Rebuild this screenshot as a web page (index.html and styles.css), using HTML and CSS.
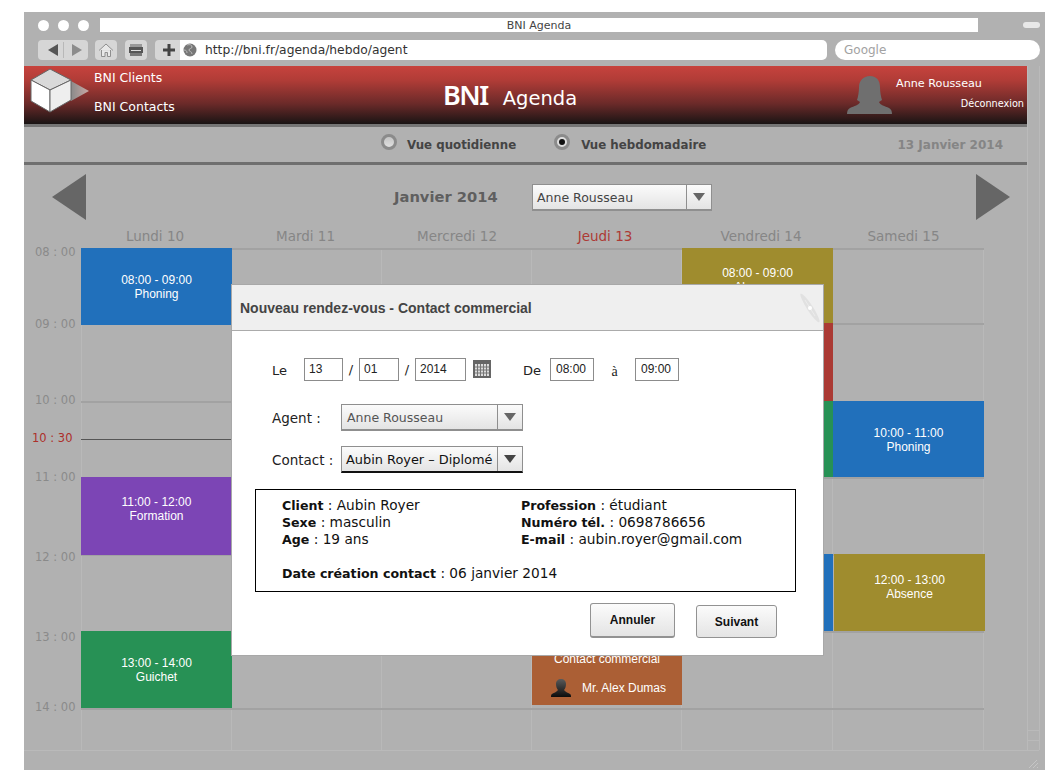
FILE: index.html
```html
<!DOCTYPE html>
<html lang="fr">
<head>
    <meta charset="UTF-8">
    <title>BNI Agenda</title>
    <link rel="stylesheet" href="styles.css">
</head>
<body>
    <div class="window">
        <div class="chrome">
            <div class="title-row">
                <div class="lights"><span></span><span></span><span></span></div>
                <div class="title-bar">BNI Agenda</div>
                <div class="pill"></div>
            </div>
            <div class="tool-row">
                <div class="tool nav-group">
                    <svg width="50" height="20" viewBox="0 0 50 20"><path d="M10 10l10-6v12z" fill="#555"/><path d="M25.500 2v16" stroke="#b8b8b8"/><path d="M34 4l10 6-10 6z" fill="#8c8c8c"/></svg>
                </div>
                <div class="tool home">
                    <svg width="22" height="20" viewBox="0 0 22 20"><path d="M4 10.500l7-6.500 7 6.500M6.500 10v6.500h3.500v-4h2.500v4h3V10" fill="#e8e8e8" stroke="#8f8f8f"/></svg>
                </div>
                <div class="tool print">
                    <svg width="22" height="20" viewBox="0 0 22 20"><rect x="5" y="4" width="12" height="3" fill="#999"/><rect x="4" y="7" width="14" height="6" fill="#555"/><rect x="6" y="10" width="10" height="1" fill="#ddd"/><rect x="5" y="13" width="12" height="3" fill="#777"/></svg>
                </div>
                <div class="tool plus">
                    <svg width="25" height="20" viewBox="0 0 25 20"><path d="M14 4v12M8 10h12" stroke="#444" stroke-width="3"/></svg>
                </div>
                <div class="url">
                    <svg width="14" height="14" viewBox="0 0 14 14"><circle cx="7" cy="7" r="6.500" fill="#777"/><path d="M4 2c3-1 5 0 5 2s-3 1-3 3 3 1 3 4M1 7c2 0 3 1 3 3" stroke="#bbb" fill="none"/></svg>
                    <span>http://bni.fr/agenda/hebdo/agent</span>
                </div>
                <div class="search">Google</div>
            </div>
        </div>

        <div class="middle">
            <div class="page">
                <header class="app-header">
                    <svg class="logo" width="60" height="46" viewBox="0 0 60 46">
                        <defs>
                            <linearGradient id="fade" x1="0" x2="1" y1="0" y2="0"><stop offset="0" stop-color="#8a8a8a"/><stop offset="1" stop-color="#c9a9a5"/></linearGradient>
                        </defs>
                        <path d="M41 13l18 10-18 10z" fill="url(#fade)"/>
                        <path d="M1 12L20 1l21 11-21 10z" fill="#d9d9d9" stroke="#666"/>
                        <path d="M1 12l19 10v22L1 33z" fill="#fff" stroke="#666"/>
                        <path d="M20 22l21-10v20L20 44z" fill="#eee" stroke="#666"/>
                    </svg>
                    <nav class="app-links">
                        <a>BNI Clients</a>
                        <a>BNI Contacts</a>
                    </nav>
                    <h1 class="app-title"><b>BNI</b> <span>Agenda</span></h1>
                    <svg class="avatar" width="46" height="38" viewBox="0 0 46 38">
                        <path d="M23 0c7 0 10 5 10 11 0 5 1 10 2 13l-3 2c1 3 6 4 10 6 2 1 3 3 3 6H0c0-3 1-5 3-6 4-2 9-3 10-6l-3-2c1-3 2-8 2-13C12 5 16 0 23 0z" fill="#6f6f6f"/>
                    </svg>
                    <div class="user">
                        <div class="user-name">Anne Rousseau</div>
                        <div class="logout">Déconnexion</div>
                    </div>
                </header>

                <div class="view-bar">
                    <span class="radio"></span>
                    <span class="view-label">Vue quotidienne</span>
                    <span class="radio radio-on"></span>
                    <span class="view-label">Vue hebdomadaire</span>
                    <span class="today">13 Janvier 2014</span>
                </div>

                <div class="month-bar">
                    <svg class="arrow" width="34" height="46" viewBox="0 0 34 46"><path d="M34 0v46L0 23z" fill="#666"/></svg>
                    <span class="month">Janvier 2014</span>
                    <div class="select month-select">
                        <span class="select-text">Anne Rousseau</span>
                        <span class="select-btn"><i class="caret"></i></span>
                    </div>
                    <svg class="arrow arrow-next" width="34" height="46" viewBox="0 0 34 46"><path d="M0 0v46l34-23z" fill="#666"/></svg>
                </div>

                <div class="days">
                    <span class="day-left">Lundi 10</span>
                    <span class="day-left">Mardi 11</span>
                    <span>Mercredi 12</span>
                    <span class="day-now">Jeudi 13</span>
                    <span class="day-fri">Vendredi 14</span>
                    <span class="day-last">Samedi 15</span>
                </div>

                <div class="agenda">
                    <div class="col c1"></div>
                    <div class="col c2"></div>
                    <div class="col c3"></div>
                    <div class="col c4"></div>
                    <div class="col c5"></div>
                    <div class="col c6"></div>
                    <div class="line r1"></div>
                    <div class="line r2"></div>
                    <div class="line r3"></div>
                    <div class="line r4"></div>
                    <div class="line r5"></div>
                    <div class="line r6"></div>
                    <div class="line r7"></div>

                    <span class="hour h8">08 : 00</span>
                    <span class="hour h9">09 : 00</span>
                    <span class="hour h10">10 : 00</span>
                    <span class="hour h11">11 : 00</span>
                    <span class="hour h12">12 : 00</span>
                    <span class="hour h13">13 : 00</span>
                    <span class="hour h14">14 : 00</span>

                    <div class="now-line"><span class="now-label">10 : 30</span></div>

                    <div class="event blue c1 r1 ev-long">08:00 - 09:00<br>Phoning</div>
                    <div class="event purple c1 r4 ev-up-more">11:00 - 12:00<br>Formation</div>
                    <div class="event green c1 r6">13:00 - 14:00<br>Guichet</div>
                    <div class="event orange c4 r6">
                        <div>Contact commercial</div>
                        <div class="contact">
                            <svg width="22" height="18" viewBox="0 0 22 18">
                                <defs>
                                    <linearGradient id="bust" x1="0" x2="0" y1="0" y2="1"><stop offset="0" stop-color="#5a5a5a"/><stop offset="1" stop-color="#0c0c0c"/></linearGradient>
                                </defs>
                                <path d="M11 0c3 0 5 2 5 5 0 3-1 5-2 6 1 2 5 3 6 4 1 .5 1 2 1 3H1c0-1 0-2.500 1-3 1-1 5-2 6-4-1-1-2-3-2-6 0-3 2-5 5-5z" fill="url(#bust)"/>
                            </svg>
                            <span>Mr. Alex Dumas</span>
                        </div>
                    </div>
                    <div class="event olive c5 r1 ev-up">08:00 - 09:00<br>Absence</div>
                    <div class="event red c5 r2"></div>
                    <div class="event green c5 r3"></div>
                    <div class="event blue c5 r5"></div>
                    <div class="event blue c6 r3 ev-down">10:00 - 11:00<br>Phoning</div>
                    <div class="event olive c6 r5 ev-up ev-wide">12:00 - 13:00<br>Absence</div>
                </div>
            </div>
            <div class="scroll">
                <div class="scroll-track"></div>
                <div class="scroll-btn"></div>
                <div class="scroll-btn"></div>
            </div>
        </div>
        <div class="status">
            <svg width="12" height="10" viewBox="0 0 12 10"><path d="M2 10l8-8M6 10l5-5M10 10l1-1" stroke="#c6c6c6"/></svg>
        </div>

        <div class="dialog">
            <div class="dialog-head">
                <span>Nouveau rendez-vous - Contact commercial</span>
                <svg width="22" height="30" viewBox="0 0 22 30">
                    <ellipse cx="11" cy="15" rx="3" ry="17" transform="rotate(-33 11 15)" fill="#e1e1e1"/>
                    <path d="M6 7l10 16" stroke="#ececec"/>
                    <circle cx="11" cy="15" r="2" fill="#fff"/>
                </svg>
            </div>
            <div class="dialog-body">
                <div class="date-row">
                    <label class="lbl-le">Le</label>
                    <span class="field f-day">13</span>
                    <span class="slash">/</span>
                    <span class="field f-month">01</span>
                    <span class="slash">/</span>
                    <span class="field f-year">2014</span>
                    <svg class="cal" width="18" height="18" viewBox="0 0 18 18">
                        <rect width="18" height="18" fill="#666"/>
                        <rect x="2" y="4" width="14" height="12" fill="#ddd"/>
                        <path d="M4.500 4v12M7.500 4v12M10.500 4v12M13.500 4v12M2 7h14M2 10h14M2 13h14" stroke="#777"/>
                    </svg>
                    <label class="lbl-de">De</label>
                    <span class="field f-time">08:00</span>
                    <label class="lbl-a">à</label>
                    <span class="field f-time">09:00</span>
                </div>
                <div class="form-row agent-row">
                    <label>Agent :</label>
                    <div class="select form-select">
                        <span class="select-text muted">Anne Rousseau</span>
                        <span class="select-btn"><i class="caret"></i></span>
                    </div>
                </div>
                <div class="form-row contact-row">
                    <label>Contact :</label>
                    <div class="select form-select select-dark">
                        <span class="select-text">Aubin Royer – Diplomé</span>
                        <span class="select-btn"><i class="caret"></i></span>
                    </div>
                </div>
                <div class="info">
                    <div class="info-cols">
                        <div class="info-col">
                            <div><b>Client</b> : Aubin Royer</div>
                            <div><b>Sexe</b> : masculin</div>
                            <div><b>Age</b> : 19 ans</div>
                        </div>
                        <div class="info-col">
                            <div><b>Profession</b> : étudiant</div>
                            <div><b>Numéro tél.</b> : 0698786656</div>
                            <div><b>E-mail</b> : aubin.royer@gmail.com</div>
                        </div>
                    </div>
                    <div class="info-date"><b>Date création contact</b> : 06 janvier 2014</div>
                </div>
                <div class="actions">
                    <button class="btn btn-main">Annuler</button>
                    <button class="btn">Suivant</button>
                </div>
            </div>
        </div>
    </div>
</body>
</html>
```

FILE: styles.css
```css
* {
    box-sizing: border-box;
}
body {
    margin: 0;
    background-color: #fff;
    font-family: "DejaVu Sans", sans-serif;
    overflow: hidden;
}
.window {
    position: relative;
    width: 1021px;
    height: 758px;
    margin: 12px 0 0 24px;
    background-color: #b1b1b1;
}

/* browser frame */
.chrome {
    height: 54px;
    padding-top: 6px;
}
.title-row {
    display: flex;
    align-items: center;
    height: 14px;
}
.lights {
    display: flex;
    gap: 9px;
    width: 76px;
    padding-left: 14px;
}
.lights span {
    width: 11px;
    height: 11px;
    border-radius: 50%;
    background-color: #fff;
}
.title-bar {
    width: 878px;
    height: 14px;
    background-color: #fff;
    color: #444;
    font-size: 11px;
    line-height: 15px;
    text-align: center;
}
.pill {
    width: 17px;
    height: 6px;
    margin-left: 45px;
    border-radius: 3px;
    background-color: #e8e8e8;
}
.tool-row {
    display: flex;
    height: 20px;
    margin-top: 8px;
    padding-left: 14px;
}
.tool {
    height: 20px;
    border-radius: 4px;
    background-color: #d6d6d6;
}
.tool svg {
    display: block;
}
.nav-group {
    width: 50px;
}
.home {
    width: 22px;
    margin-left: 7px;
}
.print {
    width: 22px;
    margin-left: 8px;
}
.plus {
    width: 25px;
    margin-left: 8px;
    border-radius: 4px 0 0 4px;
}
.url {
    display: flex;
    align-items: center;
    gap: 8px;
    width: 647px;
    padding-left: 3px;
    border-radius: 0 5px 5px 0;
    background-color: #fff;
    color: #333;
    font-size: 12.300px;
}
.search {
    width: 205px;
    margin-left: 8px;
    padding-left: 9px;
    border-radius: 10px;
    background-color: #fff;
    color: #a2a2a2;
    font-size: 12px;
    line-height: 20px;
}

.middle {
    display: flex;
    height: 684px;
}
.page {
    width: 1003px;
}
.scroll {
    display: flex;
    flex-direction: column;
    width: 13px;
    padding-top: 6px;
    border-right: 1px solid #bababa;
    border-left: 1px solid #bababa;
}
.scroll-track {
    flex: 1;
}
.scroll-btn {
    height: 10px;
    border-top: 1px solid #bababa;
}
.status {
    display: flex;
    justify-content: flex-end;
    align-items: flex-end;
    width: 1015px;
    height: 20px;
    padding-bottom: 2px;
    border-top: 1px solid #bababa;
}

/* app header */
.app-header {
    display: flex;
    height: 61px;
    border-bottom: 3px solid #757575;
    background: linear-gradient(#c7433d 0%, #b03c37 25%, #6b2a29 65%, #191414 100%);
    color: #fff;
}
.logo {
    flex: none;
    margin: 2px 0 0 6px;
}
.app-links {
    display: flex;
    flex-direction: column;
    gap: 15px;
    width: 120px;
    margin-left: 4px;
    padding-top: 5px;
    font-size: 12.500px;
    line-height: 14px;
}
.app-title {
    display: flex;
    flex: none;
    align-items: baseline;
    gap: 15px;
    width: 135px;
    margin: 0 0 0 229px;
    padding-top: 9px;
    font-size: 19.500px;
    font-weight: normal;
    line-height: 40px;
    white-space: nowrap;
}
.app-title b {
    font-family: "Noto Sans", sans-serif;
    font-size: 27px;
    font-weight: 600;
    letter-spacing: -1.500px;
}
.avatar {
    flex: none;
    margin: 10px 0 0 269px;
}
.user {
    width: 131px;
    padding: 11px 0 0 3px;
}
.user-name {
    font-size: 11.200px;
    line-height: 14px;
}
.logout {
    margin-top: 7px;
    font-size: 9.700px;
    line-height: 12px;
    text-align: right;
}

/* view switch */
.view-bar {
    display: flex;
    align-items: center;
    height: 38px;
    padding: 0 24px 0 357px;
    border-bottom: 3px solid #6f6f6f;
}
.radio {
    width: 16px;
    height: 16px;
    margin-top: -5px;
    border: 3px solid #8b8b8b;
    border-radius: 50%;
    background: linear-gradient(#c4c4c4, #e0e0e0);
}
.radio-on {
    position: relative;
    margin-left: 38px;
    background: #dedede;
}
.radio-on::after {
    content: "";
    position: absolute;
    top: 2px;
    left: 2px;
    width: 6px;
    height: 6px;
    border-radius: 50%;
    background-color: #111;
}
.view-label {
    margin-left: 10px;
    color: #444;
    font-size: 11.800px;
    font-weight: bold;
}
.view-label:nth-child(4) {
    margin-left: 11px;
}
.today {
    margin-left: auto;
    color: #858585;
    font-size: 12px;
    font-weight: bold;
}

/* month row */
.month-bar {
    display: flex;
    align-items: flex-start;
    height: 63px;
    padding: 9px 17px 0 28px;
}
.month {
    width: 138px;
    margin: 13px 0 0 308px;
    color: #5f5f5f;
    font-size: 14.700px;
    font-weight: bold;
    line-height: 20px;
}
.arrow-next {
    margin-left: auto;
}
.select {
    display: flex;
    border: 1px solid #8f8f8f;
    border-bottom-width: 2px;
    background: linear-gradient(#fbfbfb, #e4e4e4);
    color: #444;
    font-size: 12px;
}
.select-text {
    flex: 1;
    padding-left: 5px;
    white-space: nowrap;
}
.select-btn {
    display: flex;
    align-items: center;
    justify-content: center;
    width: 25px;
    border-left: 1px solid #8f8f8f;
}
.caret {
    width: 0;
    height: 0;
    border-top: 8px solid #666;
    border-right: 6px solid transparent;
    border-left: 6px solid transparent;
}
.month-select {
    width: 180px;
    height: 27px;
    margin-top: 10px;
    font-size: 12.500px;
    line-height: 25px;
}
.month-select .select-text {
    padding-left: 4px;
}

/* agenda */
.days {
    display: grid;
    grid-template-columns: 151px 150px 150px 150px 151px 151px;
    height: 20px;
    padding-left: 57px;
    color: #868686;
    font-size: 13.500px;
    line-height: 16px;
    text-align: center;
}
.day-left {
    padding-right: 3px;
}
.day-now {
    padding-right: 4px;
    color: #ad3a35;
}
.day-fri {
    padding-left: 7px;
}
.day-last {
    padding-right: 10px;
}
.agenda {
    display: grid;
    grid-template-columns: 57px 151px 150px 150px 150px 151px 151px;
    grid-template-rows: 75px 78px 76px 77px 77px 77px 42px;
    height: 502px;
    font-family: "Liberation Sans", sans-serif;
}
.col {
    grid-row: 1 / 8;
    border-right: 1px solid #b9b9b9;
}
.col.c1 {
    border-left: 1px solid #b9b9b9;
}
.c1 { grid-column: 2; }
.c2 { grid-column: 3; }
.c3 { grid-column: 4; }
.c4 { grid-column: 5; }
.c5 { grid-column: 6; }
.c6 { grid-column: 7; }
.r1 { grid-row: 1; }
.r2 { grid-row: 2; }
.r3 { grid-row: 3; }
.r4 { grid-row: 4; }
.r5 { grid-row: 5; }
.r6 { grid-row: 6; }
.r7 { grid-row: 7; }
.line {
    grid-column: 2 / 8;
    border-top: 2px solid #a2a2a2;
}
.hour, .now-label {
    color: #8a8a8a;
    font-family: "DejaVu Sans", sans-serif;
    font-size: 11.500px;
    line-height: 14px;
    white-space: nowrap;
}
.hour {
    grid-column: 1;
    padding-left: 11px;
}
.h8 { grid-row: 1; margin-top: -3px; }
.h9 { grid-row: 2; margin-top: -6px; }
.h10 { grid-row: 3; margin-top: -8px; }
.h11 { grid-row: 4; margin-top: -7px; }
.h12 { grid-row: 5; margin-top: -4px; }
.h13 { grid-row: 6; margin-top: -1px; }
.h14 { grid-row: 7; margin-top: -8px; }
.now-line {
    grid-column: 2;
    grid-row: 3;
    position: relative;
    height: 1px;
    margin-top: 38px;
    background-color: #555;
}
.now-label {
    position: absolute;
    top: -8px;
    left: -49px;
    color: #ad2f2a;
}
.event {
    display: flex;
    flex-direction: column;
    justify-content: center;
    overflow: hidden;
    color: #fff;
    font-size: 12px;
    line-height: 14px;
    text-align: center;
}
.ev-long {
    margin-bottom: -2px;
}
.ev-up {
    padding-bottom: 12px;
}
.ev-down {
    padding-top: 2px;
}
.ev-up-more {
    margin-bottom: -1px;
    padding-bottom: 14px;
}
.ev-wide {
    margin-right: -1px;
    margin-left: 1px;
}
.blue { background-color: #2170bb; }
.purple { background-color: #7c45b5; }
.green { background-color: #279155; }
.olive { background-color: #9f8c2e; }
.red { background-color: #ab3a34; }
.orange {
    justify-content: flex-end;
    height: 74px;
    padding-bottom: 8px;
    background-color: #ab5f35;
}
.contact {
    display: flex;
    align-items: center;
    gap: 10px;
    margin-top: 13px;
    padding-left: 18px;
}

/* dialog */
.dialog {
    position: absolute;
    top: 272px;
    left: 207px;
    width: 593px;
    height: 372px;
    border: 1px solid #a8a8a8;
    background-color: #fff;
    color: #222;
}
.dialog-head {
    display: flex;
    align-items: center;
    justify-content: space-between;
    height: 46px;
    padding: 0 2px 0 8px;
    border-bottom: 1px solid #ababab;
    background-color: #efefef;
    color: #444;
    font-family: "Liberation Sans", sans-serif;
    font-size: 14px;
    font-weight: bold;
}
.dialog-body {
    padding: 26px 0 0 40px;
    font-size: 13px;
}
.date-row {
    display: flex;
    align-items: center;
    height: 24px;
}
.date-row label {
    padding-top: 2px;
}
.field {
    height: 23px;
    padding-left: 4px;
    border: 1px solid #8c8c8c;
    font-family: "Liberation Sans", sans-serif;
    font-size: 12px;
    line-height: 20px;
}
.lbl-le { width: 32px; }
.f-day { width: 39px; }
.f-month { width: 40px; }
.f-year { width: 51px; }
.slash {
    width: 16px;
    text-align: center;
}
.cal {
    margin-left: 7px;
}
.lbl-de {
    margin-left: 32px;
    width: 27px;
}
.f-time {
    width: 44px;
    padding-left: 5px;
}
.date-row .lbl-a {
    width: 41px;
    padding-top: 5px;
    font-family: "Liberation Serif", serif;
    font-size: 14px;
    text-align: center;
}
.form-row {
    display: flex;
    align-items: center;
    height: 27px;
}
.form-row label {
    width: 69px;
    font-size: 13.500px;
}
.agent-row {
    margin-top: 23px;
}
.contact-row {
    margin-top: 15px;
}
.form-select {
    width: 182px;
    height: 27px;
    font-size: 12.500px;
    line-height: 25px;
}
.muted {
    color: #555;
}
.select-dark {
    border-bottom-color: #111;
    color: #111;
    font-size: 12.900px;
}
.select-dark .select-text {
    padding-left: 4px;
}
.select-dark .caret {
    border-top-color: #444;
}
.info {
    width: 541px;
    height: 103px;
    margin: 16px 0 0 -17px;
    padding: 7px 0 0 26px;
    border: 1px solid #000;
    color: #111;
    font-size: 13.700px;
    line-height: 17px;
}
.info b {
    font-size: 12.600px;
}
.info-cols {
    display: flex;
}
.info-col {
    width: 239px;
    white-space: nowrap;
}
.info-date {
    margin-top: 17px;
}
.actions {
    display: flex;
    align-items: flex-end;
    gap: 21px;
    height: 35px;
    margin: 11px 0 0 318px;
}
.btn {
    width: 81px;
    height: 33px;
    padding: 0;
    border: 1px solid #929292;
    border-radius: 3px;
    background: linear-gradient(#fbfbfb, #e4e4e4);
    color: #111;
    font-family: "Liberation Sans", sans-serif;
    font-size: 12px;
    font-weight: bold;
}
.btn-main {
    width: 85px;
    height: 35px;
    border-bottom-width: 2px;
}
```
